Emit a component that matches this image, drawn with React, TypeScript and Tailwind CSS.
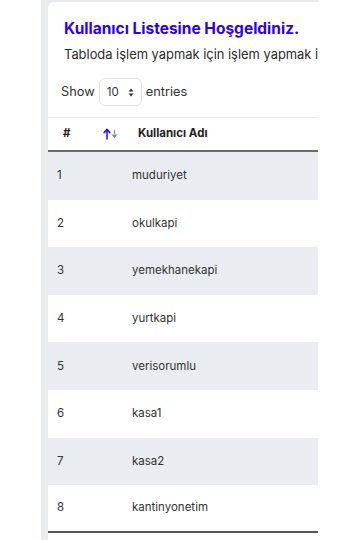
import React from 'react';

const users = ['muduriyet', 'okulkapi', 'yemekhanekapi', 'yurtkapi', 'verisorumlu', 'kasa1', 'kasa2', 'kantinyonetim'];

const SortIcon = () => (
  <svg width="16" height="14" viewBox="0 0 16 14" fill="none">
    <path d="M4 12V3" stroke="#3a10f0" strokeWidth="1.6" strokeLinecap="round" />
    <path d="M1.2 5.6 4 2.4l2.8 3.2" stroke="#3a10f0" strokeWidth="1.6" strokeLinecap="round" strokeLinejoin="round" fill="none" />
    <path d="M11.5 3v4" stroke="#8a93c8" strokeWidth="1.2" strokeLinecap="round" />
    <path d="M8.6 7.6h5.8l-2.9 3.6z" fill="#6f7fd0" />
    <path d="M8.6 7.6h5.8" stroke="#c9cdd8" strokeWidth="0.8" />
  </svg>
);

const SelectArrows = () => (
  <svg width="6" height="9" viewBox="0 0 6 9">
    <path d="M0.5 3.5 3 0.5l2.5 3z" fill="#333" />
    <path d="M0.5 5.5h5L3 8.5z" fill="#333" />
  </svg>
);

export default function App() {
  return (
    <div className="w-[344px] h-[540px] bg-white overflow-hidden" style={{ fontFamily: 'Inter, "Noto Sans", sans-serif' }}>
      <div className="ml-[41px] w-[277px] h-[540px] bg-[#e9ecef] pl-[7px] pt-[2px]">
        <div className="bg-white h-full rounded-tl-md overflow-hidden">
          <div className="pl-4 pt-[15px]">
            <h1 className="text-[15.5px] font-bold text-[#2e00f2] leading-6 whitespace-nowrap">Kullanıcı Listesine Hoşgeldiniz.</h1>
            <p className="mt-[4px] text-[12.9px] text-[#2b2b2b] leading-5 whitespace-nowrap">
              Tabloda işlem yapmak için işlem yapmak istediğiniz kullanıcıyı seçiniz.
            </p>
          </div>
          <div className="flex items-center pl-[13px] mt-[13px] text-[12.8px] text-[#333]">
            <span>Show</span>
            <div className="ml-[4px] w-[43px] h-[28px] border border-[#dee2e6] rounded-md flex items-center pl-[7px] gap-[9px]">
              <span className="text-[11.5px] mt-[2px]">10</span>
              <SelectArrows />
            </div>
            <span className="ml-[4px]">entries</span>
          </div>
          <div className="mt-[11px] border-t border-[#eceef1]">
            <div className="h-[34px] flex items-center text-[11.5px] font-bold text-[#222] border-b-2 border-[#6b6b6b]">
              <span className="pl-[15px] w-[55px]">#</span>
              <span className="w-[35px] flex"><SortIcon /></span>
              <span>Kullanıcı Adı</span>
            </div>
            {users.map((u, i) => (
              <div
                key={u}
                className={`h-[47.6px] flex items-center text-[11.5px] text-[#333] ${i % 2 === 0 ? 'bg-[#e9edf1]' : 'bg-white'} ${i === users.length - 1 ? 'border-b-2 border-[#555]' : ''}`}
              >
                <span className="pl-[9px] w-[84px]">{i + 1}</span>
                <span>{u}</span>
              </div>
            ))}
          </div>
        </div>
      </div>
    </div>
  );
}
